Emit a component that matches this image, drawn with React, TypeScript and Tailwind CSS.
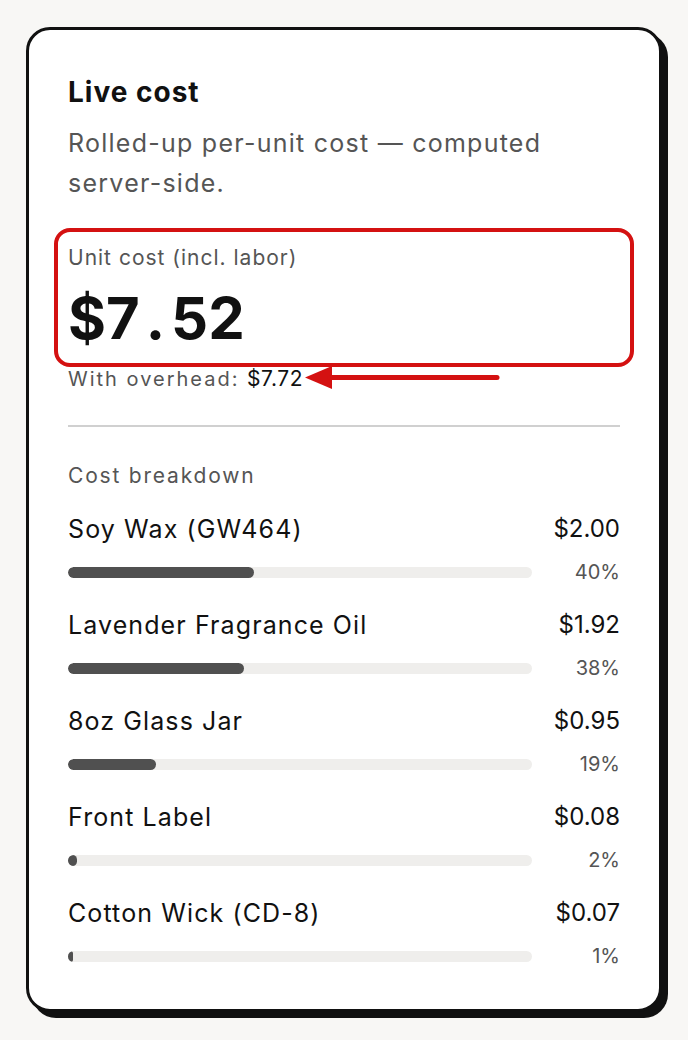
const items = [
  { name: "Soy Wax (GW464)", cost: "$2.00", pct: 40 },
  { name: "Lavender Fragrance Oil", cost: "$1.92", pct: 38 },
  { name: "8oz Glass Jar", cost: "$0.95", pct: 19 },
  { name: "Front Label", cost: "$0.08", pct: 2 },
  { name: "Cotton Wick (CD-8)", cost: "$0.07", pct: 1 },
];

export default function App() {
  return (
    <div
      className="min-h-[1040px] w-full bg-[#f8f7f5] px-[26px] pt-[27px]"
      style={{ fontFamily: "Inter, 'Noto Sans', sans-serif" }}
    >
      <div className="w-[636px] rounded-[24px] border-[3px] border-[#111] bg-white px-[39px] pb-[38px] pt-[42px] shadow-[6px_6px_0_#111]">
        <h2 className="text-[28px] font-bold leading-[40px] tracking-[1px] text-[#111]">Live cost</h2>
        <p className="mt-[11px] text-[25px] leading-[40px] tracking-[1.25px] text-[#555]">
          Rolled-up per-unit cost — computed server-side.
        </p>

        <div className="relative mt-[40px]">
          <div className="pointer-events-none absolute -left-[14px] -right-[14px] -top-[15px] h-[139px] rounded-[16px] border-[4px] border-[#d41111]" />
          <div className="text-[21px] leading-[30px] tracking-[1px] text-[#555]">Unit cost (incl. labor)</div>
          <div className="mt-[13px] flex text-[58px] font-bold leading-[64px] text-[#111]">
            <span>$7</span>
            <span className="mx-[6px]">.</span>
            <span>52</span>
          </div>
          <div className="mt-[15px] flex items-center text-[20px] leading-[28px] tracking-[2px] text-[#555]">
            <span>With overhead:&nbsp;</span>
            <span className="text-[21px] tracking-[0.6px] text-[#111]">$7.72</span>
            <svg className="ml-[1px]" width="200" height="28" viewBox="0 0 200 28">
              <polygon points="1,12.5 28,1 28,24" fill="#d41111" />
              <line x1="26" y1="12.5" x2="193" y2="12.5" stroke="#d41111" strokeWidth="5" strokeLinecap="round" />
            </svg>
          </div>
        </div>

        <div className="mt-[32px] h-[2px] bg-[#d0d0d0]" />

        <div className="mt-[34px] text-[21px] leading-[30px] tracking-[1.8px] text-[#555]">Cost breakdown</div>

        <div className="mt-[21px] flex flex-col gap-[21px]">
          {items.map((it) => (
            <div key={it.name}>
              <div className="flex items-center justify-between leading-[34px] text-[#111]">
                <span className="text-[25px] tracking-[1.1px]">{it.name}</span>
                <span className="text-[24px]">{it.cost}</span>
              </div>
              <div className="mt-[11px] flex h-[30px] items-center gap-[20px]">
                <div className="h-[11px] flex-1 overflow-hidden rounded-full bg-[#efeeec]">
                  <div className="h-full rounded-full bg-[#505050]" style={{ width: `${it.pct}%`, minWidth: it.pct < 2 ? 4 : 0 }} />
                </div>
                <span className="w-[68px] text-right text-[20px] leading-[30px] text-[#555]">{it.pct}%</span>
              </div>
            </div>
          ))}
        </div>
      </div>
    </div>
  );
}
